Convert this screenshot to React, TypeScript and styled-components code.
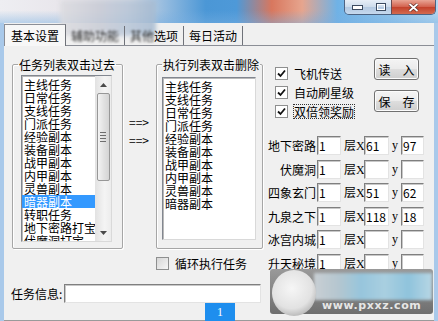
import React from 'react'
import styled, { createGlobalStyle } from 'styled-components'

const GlobalStyle = createGlobalStyle`
  html, body {
    margin: 0;
    padding: 0;
    background: #f0f0f0;
  }
  body {
    font-family: "Noto Sans CJK SC", "Noto Sans", sans-serif;
    font-size: 12px;
    color: #000;
  }
`

const leftItems = [
  '主线任务', '日常任务', '支线任务', '门派任务', '经验副本', '装备副本', '战甲副本',
  '内甲副本', '灵兽副本', '暗器副本', '转职任务', '地下密路打宝', '伏魔洞打宝',
]
const rightItems = [
  '主线任务', '支线任务', '日常任务', '门派任务', '经验副本', '装备副本', '战甲副本',
  '内甲副本', '灵兽副本', '暗器副本',
]
const rows = [
  { name: '地下密路', floor: '1', x: '61', y: '97' },
  { name: '伏魔洞', floor: '1', x: '', y: '' },
  { name: '四象玄门', floor: '1', x: '51', y: '62' },
  { name: '九泉之下', floor: '1', x: '118', y: '18' },
  { name: '冰宫内城', floor: '1', x: '', y: '' },
  { name: '升天秘境', floor: '1', x: '', y: '' },
]

const Window = styled.div`
  position: relative;
  width: 438px;
  height: 321px;
  overflow: hidden;
  background: #f0f0f0;
`

const TitleBar = styled.div`
  height: 23px;
  display: flex;
  justify-content: flex-end;
  align-items: flex-start;
  padding-right: 2px;
  background:
    linear-gradient(180deg, rgba(255, 255, 255, 0) 45%, rgba(120, 175, 225, 0.45) 100%),
    linear-gradient(90deg, #eeeef2 0%, #e7e4ea 18%, #d3d8e2 30%, #92badf 38%, #4b97d6 47%,
      #4e99d8 54%, #d8775e 62%, #e6a58e 69%, #6fb2e6 77%, #93c6ec 90%, #b6d8f0 100%);
`

const Blur = styled.div`
  position: absolute;
  left: 60px;
  top: 0;
  width: 96px;
  height: 36px;
  background: linear-gradient(90deg, #dcdce0, #c9ccd6 40%, #b8c6d8 70%, #a5bad0);
  filter: blur(2px);
  opacity: 0.85;
`

const WinButtons = styled.div`
  display: flex;
  height: 14px;
  border: 1px solid #4d6382;
  border-top: none;
  border-radius: 0 0 5px 5px;
  overflow: hidden;
`

const WinButton = styled.div<{ $w: number; $close?: boolean }>`
  width: ${(p) => p.$w}px;
  display: flex;
  align-items: center;
  justify-content: center;
  border-left: ${(p) => (p.$close ? '1px solid #6a4a50' : 'none')};
  background: ${(p) =>
    p.$close
      ? 'linear-gradient(180deg, #e9a595 0%, #d2604c 50%, #c3412b 51%, #d36a4f 100%)'
      : 'linear-gradient(180deg, #e7eef7 0%, #ccdbeb 50%, #b4c9e1 51%, #c6d9ee 100%)'};
`

const Frame = styled.div`
  height: 298px;
  display: flex;
  flex-direction: column;
  border-left: 4px solid #a9c9ea;
  border-right: 4px solid #a9c9ea;
  background: #f0f0f0;
`

const TabStrip = styled.div`
  height: 22px;
  display: flex;
  align-items: flex-end;
  position: relative;
  z-index: 1;
`

const Tab = styled.div<{ $active?: boolean }>`
  height: ${(p) => (p.$active ? 22 : 19)}px;
  box-sizing: border-box;
  padding: 0 ${(p) => (p.$active ? 6 : 5)}px;
  display: flex;
  align-items: center;
  line-height: 13px;
  background: ${(p) => (p.$active ? '#f7f7f7' : 'transparent')};
  border: ${(p) => (p.$active ? '1px solid #8b8e96' : 'none')};
  border-bottom: none;
  border-right: 1px solid #6f7279;
  margin-bottom: ${(p) => (p.$active ? -1 : 0)}px;
  white-space: nowrap;
`

const Smudge = styled.span`
  filter: blur(1.3px);
  color: #333;
`

const Panel = styled.div`
  height: 274px;
  border-top: 1px solid #8b8e96;
  border-bottom: 1px solid #9a9a9a;
  display: flex;
  flex-direction: column;
`

const MainRow = styled.div`
  height: 225px;
  padding: 12px 0 0 8px;
  display: flex;
  align-items: flex-start;
`

const GroupBox = styled.fieldset<{ $w: number; $pt: number }>`
  margin: 0;
  width: ${(p) => p.$w}px;
  height: 191px;
  box-sizing: border-box;
  padding: ${(p) => p.$pt}px 0 0 5px;
  border: 1px solid #a6a6a6;
  border-radius: 2px;
  box-shadow: 1px 1px 0 #fff, inset 1px 1px 0 #fff;
`

const Legend = styled.legend`
  padding: 0 1px;
  margin-left: 0;
  line-height: 13px;
  height: 13px;
  white-space: nowrap;
`

const ListBox = styled.div<{ $w: number; $h: number; $ml: number }>`
  width: ${(p) => p.$w}px;
  height: ${(p) => p.$h}px;
  margin-left: ${(p) => p.$ml}px;
  box-sizing: border-box;
  border: 1px solid #828790;
  border-right-color: #d9d9d9;
  border-bottom-color: #d9d9d9;
  box-shadow: inset 1px 1px 0 #b9b9b9;
  background: #fff;
  display: flex;
  overflow: hidden;
`

const Items = styled.div`
  flex: 1;
  padding-top: 2px;
  overflow: hidden;
`

const Item = styled.div<{ $sel?: boolean }>`
  height: 13px;
  line-height: 13px;
  padding-left: 2px;
  white-space: nowrap;
  background: ${(p) => (p.$sel ? '#3399ff' : 'transparent')};
  color: ${(p) => (p.$sel ? '#fff' : '#000')};
`

const ScrollBar = styled.div`
  width: 16px;
  display: flex;
  flex-direction: column;
  align-items: center;
  background: linear-gradient(90deg, #e2e2e2, #f4f4f4 60%, #ececec);
`

const Arrow = styled.div`
  height: 17px;
  width: 100%;
  display: flex;
  align-items: center;
  justify-content: center;
`

const Thumb = styled.div`
  width: 13px;
  height: 88px;
  box-sizing: border-box;
  border: 1px solid #979797;
  border-radius: 2px;
  background: linear-gradient(90deg, #f3f3f3, #e2e2e2 50%, #d4d4d4);
  display: flex;
  flex-direction: column;
  align-items: center;
  justify-content: center;
  gap: 2px;
`

const Grip = styled.span`
  width: 6px;
  height: 1px;
  background: #6e6e6e;
`

const Track = styled.div`
  flex: 1;
`

const Arrows = styled.div`
  width: 27px;
  padding: 57px 0 0 6px;
  display: flex;
  flex-direction: column;
  gap: 5px;
  line-height: 13px;
  white-space: nowrap;
`

const MidCol = styled.div`
  display: flex;
  flex-direction: column;
`

const CheckRow = styled.div<{ $h?: number; $ml?: number }>`
  height: ${(p) => p.$h ?? 19}px;
  margin-left: ${(p) => p.$ml ?? 0}px;
  display: flex;
  align-items: center;
  gap: 6px;
  white-space: nowrap;
  line-height: 13px;
`

const Box = styled.span<{ $on?: boolean }>`
  width: 11px;
  height: 11px;
  flex: none;
  border: 1px solid #8e8f8f;
  background: ${(p) => (p.$on ? '#fff' : 'linear-gradient(135deg, #d6d6d6, #f6f6f6)')};
  display: inline-flex;
  align-items: center;
  justify-content: center;
`

const Focus = styled.span`
  outline: 1px dotted #333;
  outline-offset: 0;
`

const RightCol = styled.div`
  width: 166px;
  display: flex;
  flex-direction: column;
  padding-left: 4px;
`

const TopBlock = styled.div`
  display: flex;
  justify-content: space-between;
  padding-right: 14px;
`

const Checks = styled.div`
  padding: 6px 0 0 8px;
  display: flex;
  flex-direction: column;
`

const Buttons = styled.div`
  display: flex;
  flex-direction: column;
  gap: 10px;
`

const Button = styled.div`
  width: 45px;
  height: 22px;
  box-sizing: border-box;
  border: 1px solid #707070;
  border-radius: 3px;
  background: linear-gradient(180deg, #f4f4f4 0%, #ebebeb 48%, #dddddd 52%, #cfcfcf 100%);
  box-shadow: inset 0 0 0 1px #fcfcfc;
  display: flex;
  align-items: center;
  justify-content: center;
  line-height: 13px;
`

const Grid = styled.div`
  margin-top: 15px;
  display: flex;
  flex-direction: column;
  gap: 4.6px;
`

const Row = styled.div`
  height: 19px;
  display: flex;
  align-items: center;
  line-height: 13px;
`

const RowName = styled.span`
  width: 49px;
  text-align: right;
  white-space: nowrap;
`

const Small = styled.span<{ $w: number; $center?: boolean }>`
  width: ${(p) => p.$w}px;
  text-align: ${(p) => (p.$center ? 'center' : 'left')};
  font-family: "Liberation Serif", "Noto Sans CJK SC", serif;
  white-space: nowrap;
`

const Field = styled.input<{ $w: number }>`
  width: ${(p) => p.$w}px;
  height: 19px;
  box-sizing: border-box;
  margin: 0;
  padding: 0 1px;
  border: 1px solid;
  border-color: #7f7f7f #e3e3e3 #e3e3e3 #7f7f7f;
  box-shadow: inset 1px 1px 0 #c8c8c8;
  background: #fff;
  font-family: "Noto Sans CJK SC", sans-serif;
  font-size: 12px;
  color: #000;
  outline: none;
`

const InfoRow = styled.div`
  height: 20px;
  padding-left: 7px;
  display: flex;
  align-items: center;
  gap: 2px;
  white-space: nowrap;
`

const Badge = styled.div`
  position: absolute;
  left: 205px;
  top: 303px;
  width: 30px;
  height: 18px;
  background: #1e8eee;
  color: #fff;
  font-family: "Liberation Serif", serif;
  font-size: 12px;
  display: flex;
  align-items: center;
  justify-content: center;
`

const Watermark = styled.div`
  position: absolute;
  left: 270px;
  top: 269px;
  width: 163px;
  height: 45px;
  border-radius: 3px;
  background: linear-gradient(180deg, #9a9a9a, #6e6e6e);
  overflow: visible;
`

const Disc = styled.div`
  position: absolute;
  left: 2px;
  top: 1px;
  width: 44px;
  height: 46px;
  border-radius: 50%;
  background: radial-gradient(circle at 45% 40%, #f6f6f6 0%, #e2e2e2 55%, #bdbdbd 75%, #8a8a8a 100%);
`

const Mosaic = styled.div`
  position: absolute;
  left: 44px;
  top: 4px;
  width: 118px;
  height: 27px;
  background: linear-gradient(90deg, #c9cfd4 0%, #b5c6cf 20%, #97c5dc 40%, #a9cfe0 60%, #8fc3dc 80%, #b7d6e4 100%);
  filter: blur(1.5px);
`

const Site = styled.div`
  position: absolute;
  left: 52px;
  top: 31px;
  color: #e6e6e6;
  font-family: "DejaVu Sans", sans-serif;
  font-weight: bold;
  font-size: 11px;
  letter-spacing: 0.6px;
  line-height: 12px;
`

const Tick = () => (
  <svg width="9" height="9" viewBox="0 0 9 9">
    <path d="M1 4.5 L3.5 7 L8 1.5" fill="none" stroke="#111" strokeWidth="1.8" />
  </svg>
)

const Check = ({ on, children }: { on?: boolean; children: React.ReactNode }) => (
  <>
    <Box $on={on}>{on && <Tick />}</Box>
    {children}
  </>
)

const App = () => {
  return (
    <Window>
      <GlobalStyle />
      <TitleBar>
        <WinButtons>
          <WinButton $w={25}>
            <svg width="11" height="5" viewBox="0 0 11 5">
              <rect x="0.5" y="0.5" width="10" height="4" fill="#fff" stroke="#3b4a60" />
            </svg>
          </WinButton>
          <WinButton $w={21}>
            <svg width="10" height="8" viewBox="0 0 10 8">
              <rect x="0.5" y="0.5" width="9" height="7" fill="none" stroke="#3b4a60" />
              <rect x="1.5" y="1.5" width="7" height="5" fill="none" stroke="#fff" />
            </svg>
          </WinButton>
          <WinButton $w={43} $close>
            <svg width="11" height="9" viewBox="0 0 11 9">
              <path d="M1.5 1 L9.5 8 M9.5 1 L1.5 8" stroke="#5a2a24" strokeWidth="3.2" />
              <path d="M1.5 1 L9.5 8 M9.5 1 L1.5 8" stroke="#fff" strokeWidth="1.8" />
            </svg>
          </WinButton>
        </WinButtons>
      </TitleBar>
      <Frame>
        <TabStrip>
          <Tab $active>基本设置</Tab>
          <Tab>
            <Smudge>辅助功能</Smudge>
          </Tab>
          <Tab>
            <Smudge>其他</Smudge>选项
          </Tab>
          <Tab>每日活动</Tab>
        </TabStrip>
        <Panel>
          <MainRow>
            <GroupBox $w={111} $pt={4}>
              <Legend>任务列表双击过去</Legend>
              <ListBox $w={91} $h={167} $ml={3}>
                <Items>
                  {leftItems.map((t) => (
                    <Item key={t} $sel={t === '暗器副本'}>
                      {t}
                    </Item>
                  ))}
                </Items>
                <ScrollBar>
                  <Arrow>
                    <svg width="7" height="4" viewBox="0 0 7 4">
                      <path d="M0 4 L3.5 0 L7 4 Z" fill="#4a4a4a" />
                    </svg>
                  </Arrow>
                  <Thumb>
                    <Grip />
                    <Grip />
                    <Grip />
                    <Grip />
                  </Thumb>
                  <Track />
                  <Arrow>
                    <svg width="7" height="4" viewBox="0 0 7 4">
                      <path d="M0 0 L3.5 4 L7 0 Z" fill="#4a4a4a" />
                    </svg>
                  </Arrow>
                </ScrollBar>
              </ListBox>
            </GroupBox>
            <Arrows>
              <span>==&gt;</span>
              <span>==&gt;</span>
            </Arrows>
            <MidCol>
              <GroupBox $w={107} $pt={6}>
                <Legend>执行列表双击删除</Legend>
                <ListBox $w={94} $h={163} $ml={0}>
                  <Items>
                    {rightItems.map((t) => (
                      <Item key={t}>{t}</Item>
                    ))}
                  </Items>
                </ListBox>
              </GroupBox>
              <CheckRow $h={14} style={{ marginTop: 7 }}>
                <Check>循环执行任务</Check>
              </CheckRow>
            </MidCol>
            <RightCol>
              <TopBlock>
                <Checks>
                  <CheckRow>
                    <Check on>飞机传送</Check>
                  </CheckRow>
                  <CheckRow>
                    <Check on>自动刷星级</Check>
                  </CheckRow>
                  <CheckRow>
                    <Check on>
                      <Focus>双倍领奖励</Focus>
                    </Check>
                  </CheckRow>
                </Checks>
                <Buttons>
                  <Button>读　入</Button>
                  <Button>保　存</Button>
                </Buttons>
              </TopBlock>
              <Grid>
                {rows.map((r) => (
                  <Row key={r.name}>
                    <RowName>{r.name}</RowName>
                    <Field $w={24} readOnly value={r.floor} style={{ marginLeft: 1 }} />
                    <Small $w={23}>
                      <span style={{ fontFamily: '"Noto Sans CJK SC", sans-serif', marginLeft: 3 }}>层</span>X
                    </Small>
                    <Field $w={25} readOnly value={r.x} />
                    <Small $w={12} $center>
                      y
                    </Small>
                    <Field $w={23} readOnly value={r.y} />
                  </Row>
                ))}
              </Grid>
              <CheckRow $h={13} $ml={10} style={{ marginTop: -1 }}>
                <Check on>执行完任务推荐挂机</Check>
              </CheckRow>
            </RightCol>
          </MainRow>
          <InfoRow>
            <span>任务信息:</span>
            <Field $w={197} readOnly value="" />
          </InfoRow>
        </Panel>
      </Frame>
      <Blur />
      <Badge>1</Badge>
      <Watermark>
        <Mosaic />
        <Disc />
        <Site>www.pxxz.com</Site>
      </Watermark>
    </Window>
  )
}

export default App
